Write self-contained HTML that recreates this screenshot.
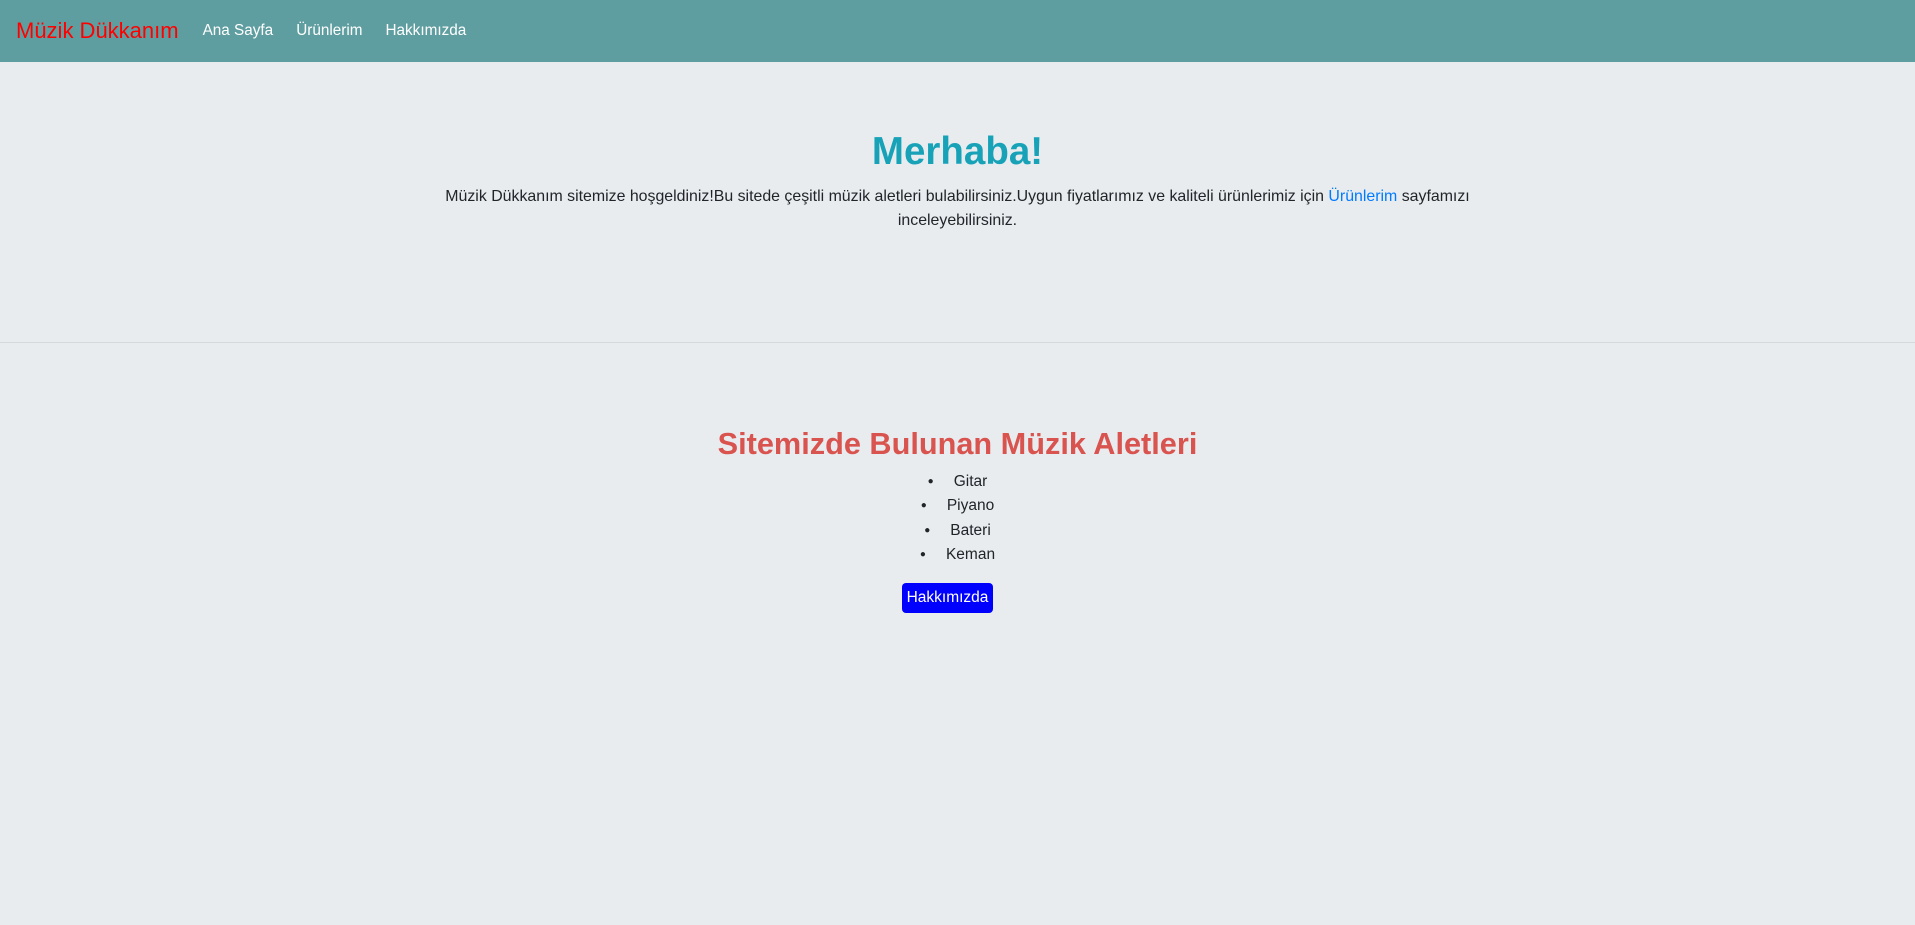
<!DOCTYPE html>
<html><head><meta charset="utf-8"><style>
*{box-sizing:border-box;margin:0;padding:0}
body{width:1915px;height:925px;background:#e9ecef;font-family:"Liberation Sans",sans-serif;color:#212529;overflow:hidden;position:relative}
nav{height:62px;background:#5f9ea0;display:flex;align-items:center;padding-left:16px}
.brand{color:#ff0000;font-size:22px;margin-right:24px}
nav a{color:#fff;font-size:15.3px;margin-right:23px;text-decoration:none}
h1{position:absolute;top:128px;left:0;width:100%;text-align:center;color:#17a2b8;font-size:38.5px;font-weight:bold;line-height:48px}
p{position:absolute;top:185px;left:0;width:100%;text-align:center;font-size:15.9px;line-height:24px}
p a{color:#007bff;text-decoration:none}
hr{position:absolute;top:342px;left:0;width:100%;border:0;border-top:1px solid #d6d8db}
h2{position:absolute;top:424px;left:0;width:100%;text-align:center;color:#d9534f;font-size:30.7px;font-weight:bold;line-height:40px}
ul{position:absolute;top:470px;left:0;width:100%;text-align:center;list-style:none;font-size:15.5px;line-height:24.3px}
ul li:before{content:"●";font-size:10px;vertical-align:2px;margin-right:20px}
.btn{position:absolute;top:583px;left:902px;width:91px;height:30px;background:#0000ff;color:#fff;border-radius:4px;font-size:15.5px;line-height:30px;text-align:center}
</style></head><body>
<nav><span class="brand">Müzik Dükkanım</span><a>Ana Sayfa</a><a>Ürünlerim</a><a>Hakkımızda</a></nav>
<h1>Merhaba!</h1>
<p>Müzik Dükkanım sitemize hoşgeldiniz!Bu sitede çeşitli müzik aletleri bulabilirsiniz.Uygun fiyatlarımız ve kaliteli ürünlerimiz için <a>Ürünlerim</a> sayfamızı<br>inceleyebilirsiniz.</p>
<hr>
<h2>Sitemizde Bulunan Müzik Aletleri</h2>
<ul><li>Gitar</li><li>Piyano</li><li>Bateri</li><li>Keman</li></ul>
<div class="btn">Hakkımızda</div>
</body></html>
